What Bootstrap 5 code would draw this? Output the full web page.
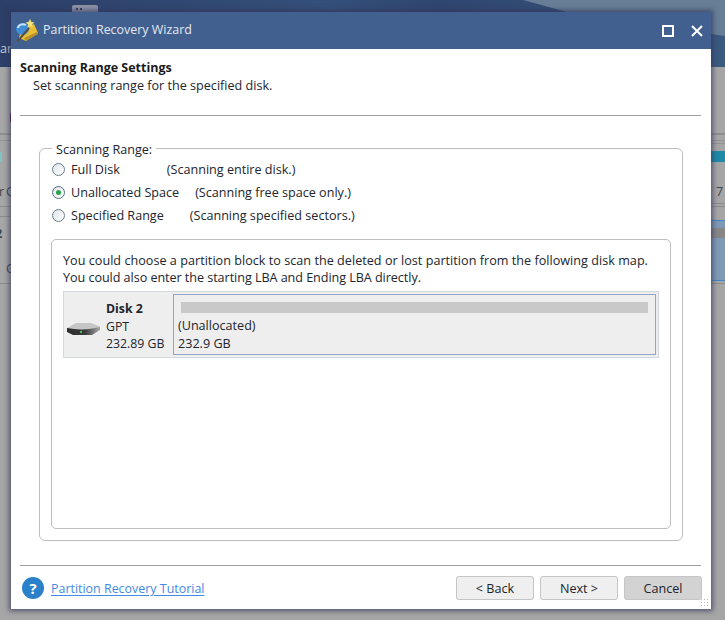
<!DOCTYPE html>
<html lang="en">
<head>
<meta charset="utf-8">
<title>Partition Recovery Wizard</title>
<link href="https://cdn.jsdelivr.net/npm/bootstrap@5.3.0/dist/css/bootstrap.min.css" rel="stylesheet">
<style>
html,body{margin:0;width:725px;height:620px;overflow:hidden}
body{font-family:"Open Sans","Noto Sans","Liberation Sans",sans-serif;font-size:12.6px;color:#20252e;background:#a6a6a6;position:relative;line-height:1.2}
.bgtop{height:67px;background:linear-gradient(95deg,#2c3f68 0%,#34507a 45%,#2f4670 60%,#3a5a80 100%)}
.bgwedge{position:absolute;left:0;top:0;width:725px;height:67px;background:#667f97;clip-path:polygon(523px 0,578px 15px,725px 36px,725px 0)}
.tabbit{position:absolute;left:72px;top:5px;width:26px;height:7px;background:#8f94a6;border-radius:2px 2px 0 0}
.tabbit::before{content:"";position:absolute;left:4px;top:3px;width:2px;height:2px;background:#333f5c;box-shadow:4px 0 0 #333f5c}
.bgband{position:absolute}
.wide{left:0;width:725px}
.rightpart{left:711px;width:14px}
.bgglyph{position:absolute;color:#3c4654;font-size:12.6px;line-height:15px}
.wizard{position:absolute;left:11px;top:12px;width:700px;height:597px;background:#fff;box-shadow:0 0 5px 2px rgba(50,50,90,.7);display:flex;flex-direction:column}
.titlebar{height:37px;background:#41608f;color:#e4e9f1;font-size:12.45px;padding-left:5px;gap:5px;flex:none}
.winbtns{margin-left:auto;gap:17px;padding-right:8px}
.body-pad{padding:11px 10px 0 9px;flex:1;display:flex;flex-direction:column;min-height:0}
.hd{font-weight:700;font-size:12.5px;color:#1b1b1b}
.sub{padding-left:13px;margin-top:3px;height:37px}
.rule{height:1px;background:#a0a0a0;margin:0}
.grp{position:relative;margin:32px 18px 0 19px;border:1px solid #bdbdbd;border-radius:6px;height:393px;padding:9px 11px 11px 11px;display:flex;flex-direction:column}
.grp-label{position:absolute;left:12px;top:-7px;background:#fff;padding:0 4px;line-height:15px}
.opt{height:23px;display:flex;align-items:center}
.opt .name{margin-left:6px}
.radio{width:13px;height:13px;border-radius:50%;border:1px solid #6d7d8d;background:linear-gradient(135deg,#dfe4ea,#fff);flex:none;position:relative;margin-left:1px}
.radio.on{border-color:#56708a}
.radio.on::after{content:"";position:absolute;left:3px;top:3px;width:5px;height:5px;border-radius:50%;background:#27a34a}
.inner{margin-top:12px;flex:1;border:1px solid #bdbdbd;border-radius:5px;padding:12px 11px 0 11px}
.inner p{margin:0;line-height:17px;white-space:nowrap}
.line-a{letter-spacing:.03px}
.line-b{letter-spacing:-.05px}
.diskmap{margin-top:5px;height:67px;background:#eeeeee;border:1px solid #d3d8de;display:flex}
.diskinfo{width:109px;flex:none;padding:8px 0 0 0}
.diskinfo .ic{width:42px;flex:none;padding:0 0 0 3px;margin-top:20px;height:20px}
.disktxt{line-height:17.5px;font-size:12.3px}
.part{flex:1;border:1px solid #93a4c6;margin:2px 2px 2px 0;padding:7px 7px 0 4px;line-height:17.5px}
.bar{height:11px;background:#c9c9c9;margin:0 0 4px 3px}
.foot{height:44px;flex:none}
.footrow{margin:10px -1px 0 2px;height:24px}
.helpc{width:22px;height:22px;border-radius:50%;background:#2a81c9;color:#fff;font-weight:700;font-size:15px;line-height:22px;text-align:center;flex:none}
.tutlink{color:#3f8ae6;font-size:12.45px;margin-left:7px;padding-top:2px;text-decoration:underline;text-underline-offset:2px}
.wbtn{width:78px;height:24px;padding:1px 0 0;font-size:12.6px;line-height:21px;color:#20252e;background:#efefef;border:1px solid #c5c5c5;border-radius:3px;font-family:inherit}
.wbtn.cancel{background:#d3d3d3}
.grip{position:absolute;right:2px;bottom:2px;width:9px;height:9px;background-image:radial-gradient(#bbb 1px,transparent 1px);background-size:3px 3px}
</style>
</head>
<body>
<div class="bgtop"></div>
<div class="bgwedge"></div>
<div class="tabbit"></div>
<div class="bgband wide" style="top:133px;height:2px;background:#8f8f8f"></div>
<div class="bgband wide" style="top:140px;height:1px;background:#939393"></div>
<div class="bgband rightpart" style="top:143px;height:1px;background:#939393"></div>
<div class="bgband" style="left:0;width:2px;top:152px;height:10px;background:#7fc4c4"></div>
<div class="bgband rightpart" style="top:151px;height:11px;background:#1f8aa8"></div>
<div class="bgband rightpart" style="top:203px;height:1px;background:#8c8c8c"></div>
<div class="bgband wide" style="top:206px;height:1px;background:#8c8c8c"></div>
<div class="bgband" style="left:0;width:11px;top:216px;height:1px;background:#8c8c8c"></div>
<div class="bgband rightpart" style="top:220px;height:61px;background:#7f9ab5;border-top:1px solid #3f88cc;border-bottom:1px solid #3f88cc"></div>
<div class="bgband rightpart" style="top:228px;height:10px;background:#878787"></div>
<div class="bgband wide" style="top:283px;height:1px;background:#8c8c8c"></div>
<div class="bgband" style="left:10px;width:2px;top:113px;height:9px;background:#5c2a5c"></div>
<span class="bgglyph" style="left:0;top:41px;color:#c9d2dd">ar</span>
<span class="bgglyph" style="left:-1px;top:184px">r</span>
<span class="bgglyph" style="left:6px;top:184px">C</span>
<span class="bgglyph" style="left:-5px;top:226px;font-weight:700">2</span>
<span class="bgglyph" style="left:6px;top:261px">C</span>
<span class="bgglyph" style="left:716px;top:184px">7</span>
<div class="wizard">
  <div class="titlebar d-flex align-items-center">
    <svg width="22" height="23" viewBox="0 0 22 23"><path d="M5 9 L18 5 L22 14 L10 22 L3 19 Z" fill="#e8bf35"/><path d="M8 19 L21 13 L22 15 L10 22Z" fill="#b8912a"/><ellipse cx="6.5" cy="10" rx="6.5" ry="6" fill="#3f8fd8"/><path d="M2 9a5 4 0 0 1 8-3" fill="none" stroke="#cfe4f7" stroke-width="2"/><path d="M1 23 L13 9" stroke="#55504a" stroke-width="2"/><path d="M14 0l1.5 3 3 .5-2.5 2 .5 3-2.5-1.5-2.5 1.5.5-3-2.5-2 3-.5z" fill="#f6e27a"/></svg>
    <span>Partition Recovery Wizard</span>
    <div class="winbtns d-flex align-items-center">
      <svg width="12" height="12" viewBox="0 0 12 12"><rect x="1" y="1" width="10" height="10" fill="none" stroke="#fff" stroke-width="2"/></svg>
      <svg width="12" height="12" viewBox="0 0 12 12"><path d="M1 1L11 11M11 1L1 11" stroke="#fff" stroke-width="2"/></svg>
    </div>
  </div>
  <div class="body-pad">
    <div class="hd">Scanning Range Settings</div>
    <div class="sub">Set scanning range for the specified disk.</div>
    <div class="rule"></div>
    <div class="grp">
      <span class="grp-label">Scanning Range:</span>
      <div class="opt"><span class="radio"></span><span class="name">Full Disk</span><span style="margin-left:47px">(Scanning entire disk.)</span></div>
      <div class="opt"><span class="radio on"></span><span class="name">Unallocated Space</span><span style="margin-left:16px">(Scanning free space only.)</span></div>
      <div class="opt"><span class="radio"></span><span class="name">Specified Range</span><span style="margin-left:26px">(Scanning specified sectors.)</span></div>
      <div class="inner">
        <p><span class="line-a">You could choose a partition block to scan the deleted or lost partition from the following disk map.</span><br><span class="line-b">You could also enter the starting LBA and Ending LBA directly.</span></p>
        <div class="diskmap">
          <div class="diskinfo d-flex">
            <div class="ic"><svg width="33" height="13" viewBox="0 0 33 13"><defs><linearGradient id="fr" x1="0" x2="1"><stop offset="0" stop-color="#2c2c2c"/><stop offset=".55" stop-color="#3a3a3a"/><stop offset="1" stop-color="#a8a8a8"/></linearGradient></defs><path d="M0 6L9 1H24L33 4.500L33 7 0 8Z" fill="#c6c6c6"/><path d="M0 6C10 8 22 8 33 5V8L25 13H6L0 10Z" fill="url(#fr)"/><rect x="13" y="9" width="2" height="2" fill="#3bc45c"/></svg></div>
            <div class="disktxt"><b>Disk 2</b><br>GPT<br>232.89 GB</div>
          </div>
          <div class="part">
            <div class="bar"></div>
            (Unallocated)<br>232.9 GB
          </div>
        </div>
      </div>
    </div>
    <div class="foot mt-auto">
      <div class="rule"></div>
      <div class="footrow d-flex align-items-center">
        <span class="helpc">?</span>
        <a class="tutlink" href="#">Partition Recovery Tutorial</a>
        <div class="ms-auto d-flex" style="gap:6px"><button class="wbtn">&lt; Back</button><button class="wbtn">Next &gt;</button><button class="wbtn cancel">Cancel</button></div>
      </div>
    </div>
  </div>
  <div class="grip"></div>
</div>
</body>
</html>
